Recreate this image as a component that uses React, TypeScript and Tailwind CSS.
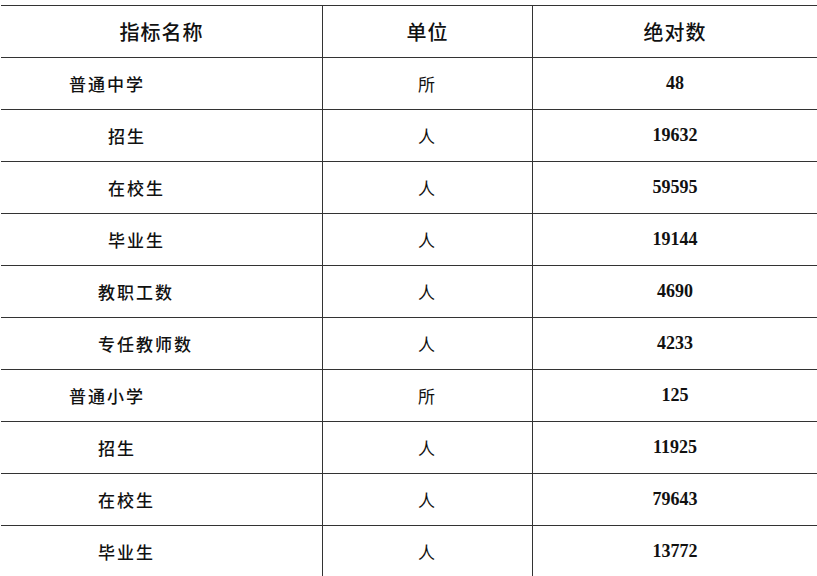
const rows = [
  { name: '普通中学', indent: 'pl-[68px]', unit: '所', value: '48' },
  { name: '招生', indent: 'pl-[107px]', unit: '人', value: '19632' },
  { name: '在校生', indent: 'pl-[107px]', unit: '人', value: '59595' },
  { name: '毕业生', indent: 'pl-[107px]', unit: '人', value: '19144' },
  { name: '教职工数', indent: 'pl-[97px]', unit: '人', value: '4690' },
  { name: '专任教师数', indent: 'pl-[97px]', unit: '人', value: '4233' },
  { name: '普通小学', indent: 'pl-[68px]', unit: '所', value: '125' },
  { name: '招生', indent: 'pl-[97px]', unit: '人', value: '11925' },
  { name: '在校生', indent: 'pl-[97px]', unit: '人', value: '79643' },
  { name: '毕业生', indent: 'pl-[97px]', unit: '人', value: '13772' },
];

const cjk = "font-['Noto_Sans_CJK_SC',sans-serif]";

export default function App() {
  return (
    <div className="h-[576px] w-[817px] overflow-hidden bg-white pt-[5px] text-[#111]">
      <div className="ml-[1px] border-t border-[#333]">
        {/* header */}
        <div className="grid h-[52px] grid-cols-[322px_210px_1fr] border-b border-[#333]">
          <div className={`flex items-center justify-center border-r border-[#333] text-[20px] font-medium tracking-[1px] ${cjk}`}>
            指标名称
          </div>
          <div className={`flex items-center justify-center border-r border-[#333] text-[20px] font-medium tracking-[1px] ${cjk}`}>
            单位
          </div>
          <div className={`flex items-center justify-center text-[20px] font-medium tracking-[1px] ${cjk}`}>
            绝对数
          </div>
        </div>

        {rows.map((r, i) => (
          <div key={i} className="grid h-[52px] grid-cols-[322px_210px_1fr] border-b border-[#333]">
            <div className={`flex items-center border-r border-[#333] ${r.indent} text-[17px] font-medium tracking-[2px] ${cjk}`}>
              {r.name}
            </div>
            <div className={`flex items-center border-r border-[#333] pl-[95px] text-[17px] ${cjk}`}>
              {r.unit}
            </div>
            <div className="flex items-center justify-center font-['Liberation_Serif',serif] text-[18px] font-bold">
              {r.value}
            </div>
          </div>
        ))}
      </div>
    </div>
  );
}
